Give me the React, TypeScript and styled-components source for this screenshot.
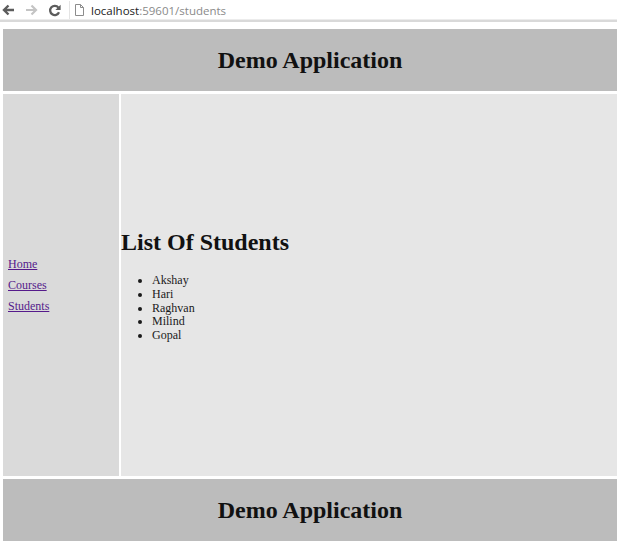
import React from "react";
import styled, { createGlobalStyle } from "styled-components";

const GlobalStyle = createGlobalStyle`
  html, body {
    margin: 0;
    padding: 0;
    background: #ffffff;
  }
  body {
    font-family: "Liberation Serif", "Times New Roman", serif;
    color: #111111;
  }
`;

const BrowserBar = styled.div`
  display: flex;
  align-items: center;
  height: 20px;
  border-bottom: 2px solid #d9d9d9;
  box-shadow: inset 0 -1px 0 #ececec;
  background: #ffffff;
`;

const NavButton = styled.span<{ disabled?: boolean }>`
  display: flex;
  align-items: center;
  justify-content: center;
  width: 14px;
  height: 16px;
  margin-left: ${({ disabled }) => (disabled ? "9px" : "1px")};
  color: ${({ disabled }) => (disabled ? "#c4c4c4" : "#5c5c5c")};

  & + & {
    margin-left: 9px;
  }

  & > svg {
    display: block;
  }
`;

const Omnibox = styled.div`
  display: flex;
  align-items: center;
  height: 18px;
  margin-left: 8px;
  padding-left: 5px;
  border-left: 1px solid #e4e4e4;
  font-family: "Open Sans", "Noto Sans", sans-serif;
  font-size: 11.5px;

  & > svg {
    display: block;
    margin-right: 7px;
  }
`;

const Host = styled.span`
  color: #222222;
`;

const UrlPath = styled.span`
  color: #8a8a8a;
`;

const Page = styled.div`
  display: flex;
  flex-direction: column;
  gap: 3px;
  margin: 7px 0 0 3px;
`;

const Banner = styled.header`
  display: flex;
  align-items: center;
  justify-content: center;
  height: 62px;
  background: #bcbcbc;

  & > h2 {
    margin: 0;
    font-size: 24px;
    font-weight: bold;
    color: #111111;
  }
`;

const Middle = styled.div`
  display: flex;
  gap: 2px;
  height: 382px;
`;

const SideNav = styled.nav`
  display: flex;
  flex-direction: column;
  justify-content: center;
  width: 116px;
  padding-left: 5px;
  box-sizing: border-box;
  background: #dadada;
`;

const NavLink = styled.a`
  display: block;
  line-height: 21px;
  font-size: 12px;
  color: #551a8b;
  text-decoration: underline;
`;

const Content = styled.main`
  display: flex;
  flex-direction: column;
  justify-content: center;
  flex: 1;
  padding-top: 2px;
  background: #e6e6e6;
`;

const Title = styled.h2`
  margin: 0 0 18px;
  font-size: 24px;
  font-weight: bold;
  color: #111111;
`;

const StudentList = styled.ul`
  margin: 0;
  padding-left: 31px;
  font-size: 12px;
  line-height: 13.7px;
  color: #1a1a1a;
`;

const students = ["Akshay", "Hari", "Raghvan", "Milind", "Gopal"];

const BackIcon = () => (
  <svg width="13" height="12" viewBox="0 0 13 12" fill="none" stroke="currentColor" strokeWidth="2.4">
    <path d="M12 6H2.5M6.5 1.5L2 6l4.5 4.5" />
  </svg>
);

const ForwardIcon = () => (
  <svg width="13" height="12" viewBox="0 0 13 12" fill="none" stroke="currentColor" strokeWidth="2.2">
    <path d="M1 6h9.5M6.5 1.5L11 6l-4.5 4.5" />
  </svg>
);

const ReloadIcon = () => (
  <svg width="13" height="13" viewBox="0 0 13 13" fill="none">
    <path d="M10.4 3.6A4.6 4.6 0 1 0 11 8.2" stroke="currentColor" strokeWidth="2.3" />
    <path d="M12.6 0.8v5.2H7.4z" fill="currentColor" />
  </svg>
);

const PageIcon = () => (
  <svg width="9" height="12" viewBox="0 0 9 12" fill="none" stroke="#8c8c8c" strokeWidth="1">
    <path d="M0.5 0.5h5l3 3v8h-8z" />
    <path d="M5.5 0.5v3h3" />
  </svg>
);

export default function App() {
  return (
    <>
      <GlobalStyle />
      <BrowserBar>
        <NavButton>
          <BackIcon />
        </NavButton>
        <NavButton disabled>
          <ForwardIcon />
        </NavButton>
        <NavButton>
          <ReloadIcon />
        </NavButton>
        <Omnibox>
          <PageIcon />
          <Host>localhost</Host>
          <UrlPath>:59601/students</UrlPath>
        </Omnibox>
      </BrowserBar>
      <Page>
        <Banner>
          <h2>Demo Application</h2>
        </Banner>
        <Middle>
          <SideNav>
            <NavLink href="#home">Home</NavLink>
            <NavLink href="#courses">Courses</NavLink>
            <NavLink href="#students">Students</NavLink>
          </SideNav>
          <Content>
            <Title>List Of Students</Title>
            <StudentList>
              {students.map(name => (
                <li key={name}>{name}</li>
              ))}
            </StudentList>
          </Content>
        </Middle>
        <Banner>
          <h2>Demo Application</h2>
        </Banner>
      </Page>
    </>
  );
}
